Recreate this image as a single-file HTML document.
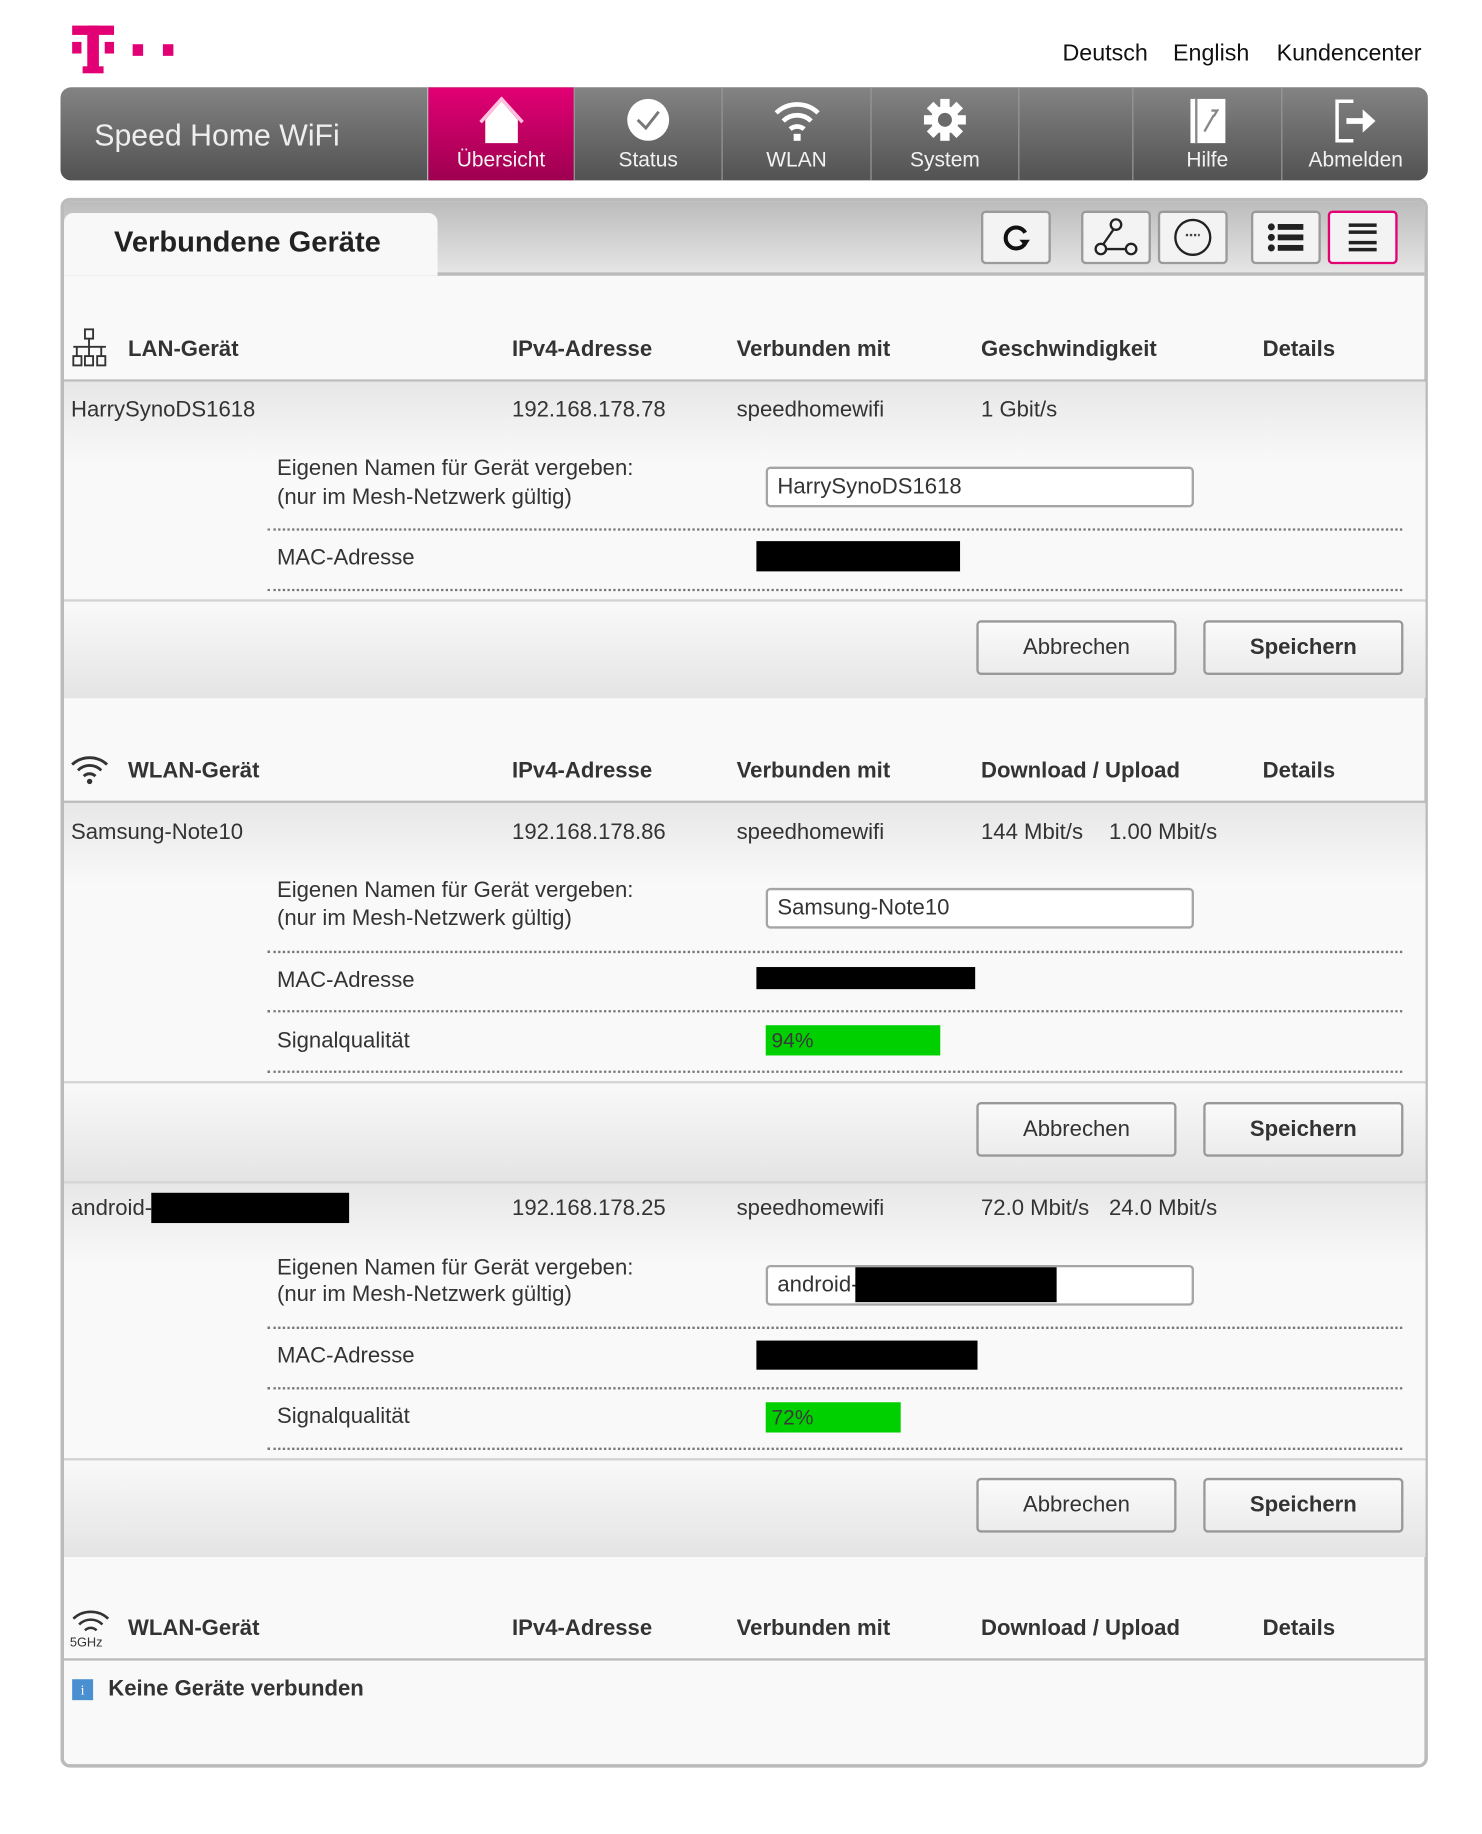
<!DOCTYPE html>
<html><head><meta charset="utf-8"><style>
*{margin:0;padding:0;box-sizing:border-box}
html,body{width:1482px;height:1824px;overflow:hidden;background:#fff}
#s{position:absolute;left:0;top:0;width:1280px;height:1576px;transform:scale(1.1637);transform-origin:0 0;font-family:"Liberation Sans",Arial,sans-serif;color:#333}
.a{position:absolute}
.t{position:absolute;font-size:19px;line-height:22px;white-space:nowrap;transform:translateY(-11px)}
.b{font-weight:bold}
.nav{left:52px;top:75px;width:1175px;height:80px;border-radius:9px;background:linear-gradient(#838383,#525252);overflow:hidden}
.tab{position:absolute;top:0;height:80px;border-left:1px solid #999;color:#f2f2f2;font-size:18px;text-align:center}
.tab span{position:absolute;left:0;right:0;top:52px}
.tab svg{position:absolute;left:50%;top:8px;transform:translateX(-50%)}
.dot{position:absolute;height:0;border-top:2px dotted #777}
.line{position:absolute;left:55px;width:1170px;height:2px;background:#bbb}
.row{position:absolute;left:55px;width:1170px;background:linear-gradient(#e7e7e7,#f9f9f9 70px,#f9f9f9)}
.bar{position:absolute;left:55px;width:1170px;background:linear-gradient(#f9f9f9,#e4e4e4);border-top:2px solid #d3d3d3}
.btn{position:absolute;width:172px;height:47px;border:2px solid #999;border-radius:4px;background:linear-gradient(#fafafa,#ececec);font-size:19px;text-align:center;line-height:43px}
.inp{position:absolute;left:658px;width:368px;height:35px;border:2px solid #a5a5a5;border-radius:4px;background:#fff;font-size:19px;line-height:31px;padding-left:8px}
.blk{position:absolute;background:#000}
.grn{position:absolute;left:658px;background:#00d000;font-size:18px;line-height:26px;padding-left:5px;color:#3a3a3a;height:26px}
.ib{position:absolute;top:181px;width:60px;height:46px;border:2px solid #9a9a9a;border-radius:4px;background:#f3f3f3}
.ib svg{position:absolute;left:50%;top:50%;transform:translate(-50%,-50%)}
</style></head><body><div id="s">
<div class="a" style="left:62px;top:22px;width:36px;height:8px;background:#e20074"></div>
<div class="a" style="left:75px;top:22px;width:10px;height:38px;background:#e20074"></div>
<div class="a" style="left:71px;top:57px;width:18px;height:6px;background:#e20074"></div>
<div class="a" style="left:62px;top:36px;width:8px;height:10px;background:#e20074"></div>
<div class="a" style="left:90px;top:36px;width:8px;height:10px;background:#e20074"></div>
<div class="a" style="left:114px;top:38px;width:9px;height:10px;background:#e20074"></div>
<div class="a" style="left:140px;top:38px;width:9px;height:10px;background:#e20074"></div>
<div class="t" style="left:913px;top:46px;font-size:20px;color:#111">Deutsch</div>
<div class="t" style="left:1008px;top:46px;font-size:20px;color:#111">English</div>
<div class="t" style="left:1097px;top:46px;font-size:20px;color:#111">Kundencenter</div>
<div class="a nav">
<div class="a" style="left:29px;top:26px;color:#eee;font-size:26px">Speed Home WiFi</div>
<div class="tab" style="left:315px;width:126px;background:linear-gradient(#e20074,#9e0050);border-left:1px solid #bbb">
<svg width="40" height="44" viewBox="0 0 40 44"><path d="M6 20 L20 4 L34 20 L34 40 L6 40Z" fill="#fff"/><path d="M2 22 L20 2 L38 22" fill="none" stroke="#ffc0dd" stroke-width="3"/></svg><span>Übersicht</span></div>
<div class="tab" style="left:441px;width:127px"><svg width="40" height="40" viewBox="0 0 40 40"><circle cx="20" cy="20" r="18" fill="#fff"/><path d="M11 20 L18 27 L29 13" fill="none" stroke="#777" stroke-width="2.5"/></svg><span>Status</span></div>
<div class="tab" style="left:568px;width:128px"><svg width="44" height="40" viewBox="0 0 44 40"><g fill="none" stroke="#fff" stroke-width="4"><path d="M4 14 A26 26 0 0 1 40 14"/><path d="M10 21 A17 17 0 0 1 34 21"/><path d="M16 28 A9 9 0 0 1 28 28"/></g><rect x="19" y="32" width="6" height="6" fill="#fff"/></svg><span>WLAN</span></div>
<div class="tab" style="left:696px;width:127px"><svg width="40" height="40" viewBox="0 0 40 40"><g fill="#fff"><circle cx="20" cy="20" r="12"/><rect x="16" y="2" width="8" height="36"/><rect x="2" y="16" width="36" height="8"/><rect x="16" y="2" width="8" height="36" transform="rotate(45 20 20)"/><rect x="16" y="2" width="8" height="36" transform="rotate(-45 20 20)"/></g><circle cx="20" cy="20" r="6" fill="#6a6a6a"/></svg><span>System</span></div>
<div class="tab" style="left:823px;width:98px"></div>
<div class="tab" style="left:921px;width:128px"><svg width="34" height="42" viewBox="0 0 34 42"><rect x="2" y="2" width="30" height="38" fill="#fff"/><rect x="6" y="2" width="2" height="38" fill="#888"/><path d="M14 30 L22 16 M20 12 L25 12 L22 17" stroke="#888" stroke-width="2" fill="none"/></svg><span>Hilfe</span></div>
<div class="tab" style="left:1049px;width:127px"><svg width="40" height="42" viewBox="0 0 40 42"><path d="M18 4 H4 V38 H18" fill="none" stroke="#fff" stroke-width="3"/><path d="M12 21 H28" stroke="#fff" stroke-width="5"/><path d="M26 11 L37 21 L26 31Z" fill="#fff"/></svg><span>Abmelden</span></div>
</div>
<div class="a" style="left:52px;top:170px;width:1175px;height:1349px;border:3px solid #bbb;border-radius:8px;background:#f9f9f9;overflow:hidden">
<div class="a" style="left:0;top:0;width:1170px;height:64px;background:linear-gradient(#bcbcbc,#e5e5e5);border-bottom:3px solid #bbb"></div>
<div class="a" style="left:0;top:10px;width:321px;height:54px;background:#f8f8f8;border-radius:8px 8px 0 0"></div>
</div>
<div class="t b" style="left:98px;top:208px;font-size:25px;line-height:28px;transform:translateY(-14px);color:#222">Verbundene Geräte</div>
<div class="ib" style="left:843px"><svg width="28" height="28" viewBox="0 0 28 28"><path d="M22 10 A9 9 0 1 0 22 19" fill="none" stroke="#111" stroke-width="3.5"/><path d="M17 16 L26 16 L22 22Z" fill="#111"/></svg></div>
<div class="ib" style="left:929px"><svg width="40" height="36" viewBox="0 0 40 36"><g fill="none" stroke="#222" stroke-width="2"><circle cx="20" cy="7" r="4.5"/><circle cx="7" cy="28" r="4.5"/><circle cx="33" cy="28" r="4.5"/><path d="M18 11 L9 24 M12 28 H28"/></g></svg></div>
<div class="ib" style="left:995px"><svg width="36" height="36" viewBox="0 0 36 36"><circle cx="18" cy="18" r="15" fill="none" stroke="#222" stroke-width="2"/><path d="M12 16 H24" stroke="#444" stroke-width="2" stroke-dasharray="2 1.5"/></svg></div>
<div class="ib" style="left:1075px"><svg width="32" height="26" viewBox="0 0 32 26"><g fill="#222"><circle cx="3.5" cy="4" r="3"/><circle cx="3.5" cy="13" r="3"/><circle cx="3.5" cy="22" r="3"/><rect x="9" y="1.5" width="22" height="5"/><rect x="9" y="10.5" width="22" height="5"/><rect x="9" y="19.5" width="22" height="5"/></g></svg></div>
<div class="ib" style="left:1141px;border-color:#e20074"><svg width="26" height="28" viewBox="0 0 26 28"><g fill="#222"><rect x="1" y="2" width="24" height="3"/><rect x="1" y="8" width="24" height="3"/><rect x="1" y="17" width="24" height="3"/><rect x="1" y="23" width="24" height="3"/></g></svg></div>

<svg class="a" style="left:61px;top:282px" width="32" height="34" viewBox="0 0 32 34"><g fill="none" stroke="#333" stroke-width="1.6"><rect x="12" y="1" width="7" height="8"/><path d="M15.5 9 V16 M2 16 H30 M5 16 V24 M15.5 16 V24 M26 16 V24"/><rect x="2" y="24" width="7" height="8"/><rect x="12" y="24" width="7" height="8"/><rect x="22.5" y="24" width="7" height="8"/></g></svg>
<div class="t b" style="left:110px;top:301px">LAN-Gerät</div>
<div class="t b" style="left:440px;top:301px">IPv4-Adresse</div>
<div class="t b" style="left:633px;top:301px">Verbunden mit</div>
<div class="t b" style="left:843px;top:301px">Geschwindigkeit</div>
<div class="t b" style="left:1085px;top:301px">Details</div>
<div class="line" style="top:326px"></div>
<div class="row" style="top:328px;height:188px"></div>
<div class="t" style="left:61px;top:353px">HarrySynoDS1618</div>
<div class="t" style="left:440px;top:353px">192.168.178.78</div>
<div class="t" style="left:633px;top:353px">speedhomewifi</div>
<div class="t" style="left:843px;top:353px">1 Gbit/s</div>
<div class="t" style="left:238px;top:403px">Eigenen Namen für Gerät vergeben:</div>
<div class="t" style="left:238px;top:428px">(nur im Mesh-Netzwerk gültig)</div>
<div class="inp" style="top:401px">HarrySynoDS1618</div>
<div class="dot" style="left:230px;width:975px;top:454px"></div>
<div class="t" style="left:238px;top:480px">MAC-Adresse</div>
<div class="blk" style="left:650px;top:465px;width:175px;height:26px"></div>
<div class="dot" style="left:230px;width:975px;top:506px"></div>
<div class="bar" style="top:515px;height:85px"></div>
<div class="btn" style="left:839px;top:533px">Abbrechen</div>
<div class="btn b" style="left:1034px;top:533px">Speichern</div>

<svg class="a" style="left:60px;top:648px" width="34" height="26" viewBox="0 0 34 26"><g fill="none" stroke="#333" stroke-width="2.5"><path d="M2 9 A22 22 0 0 1 32 9"/><path d="M7 14 A14 14 0 0 1 27 14"/><path d="M12 19 A7 7 0 0 1 22 19"/></g><circle cx="17" cy="23.5" r="2.3" fill="#333"/></svg>
<div class="t b" style="left:110px;top:663px">WLAN-Gerät</div>
<div class="t b" style="left:440px;top:663px">IPv4-Adresse</div>
<div class="t b" style="left:633px;top:663px">Verbunden mit</div>
<div class="t b" style="left:843px;top:663px">Download / Upload</div>
<div class="t b" style="left:1085px;top:663px">Details</div>
<div class="line" style="top:688px"></div>
<div class="row" style="top:690px;height:240px"></div>
<div class="t" style="left:61px;top:716px">Samsung-Note10</div>
<div class="t" style="left:440px;top:716px">192.168.178.86</div>
<div class="t" style="left:633px;top:716px">speedhomewifi</div>
<div class="t" style="left:843px;top:716px">144 Mbit/s</div>
<div class="t" style="left:953px;top:716px">1.00 Mbit/s</div>
<div class="t" style="left:238px;top:766px">Eigenen Namen für Gerät vergeben:</div>
<div class="t" style="left:238px;top:790px">(nur im Mesh-Netzwerk gültig)</div>
<div class="inp" style="top:763px">Samsung-Note10</div>
<div class="dot" style="left:230px;width:975px;top:817px"></div>
<div class="t" style="left:238px;top:843px">MAC-Adresse</div>
<div class="blk" style="left:650px;top:831px;width:188px;height:19px"></div>
<div class="dot" style="left:230px;width:975px;top:868px"></div>
<div class="t" style="left:238px;top:895px">Signalqualität</div>
<div class="grn" style="top:881px;width:150px">94%</div>
<div class="dot" style="left:230px;width:975px;top:920px"></div>
<div class="bar" style="top:929px;height:86px"></div>
<div class="btn" style="left:839px;top:947px">Abbrechen</div>
<div class="btn b" style="left:1034px;top:947px">Speichern</div>

<div class="row" style="top:1015px;height:239px;border-top:2px solid #d3d3d3"></div>
<div class="t" style="left:61px;top:1039px">android-</div>
<div class="blk" style="left:130px;top:1025px;width:170px;height:26px"></div>
<div class="t" style="left:440px;top:1039px">192.168.178.25</div>
<div class="t" style="left:633px;top:1039px">speedhomewifi</div>
<div class="t" style="left:843px;top:1039px">72.0 Mbit/s</div>
<div class="t" style="left:953px;top:1039px">24.0 Mbit/s</div>
<div class="t" style="left:238px;top:1090px">Eigenen Namen für Gerät vergeben:</div>
<div class="t" style="left:238px;top:1113px">(nur im Mesh-Netzwerk gültig)</div>
<div class="inp" style="top:1087px">android-</div>
<div class="blk" style="left:735px;top:1089px;width:173px;height:30px"></div>
<div class="dot" style="left:230px;width:975px;top:1140px"></div>
<div class="t" style="left:238px;top:1166px">MAC-Adresse</div>
<div class="blk" style="left:650px;top:1152px;width:190px;height:25px"></div>
<div class="dot" style="left:230px;width:975px;top:1192px"></div>
<div class="t" style="left:238px;top:1218px">Signalqualität</div>
<div class="grn" style="top:1205px;width:116px">72%</div>
<div class="dot" style="left:230px;width:975px;top:1244px"></div>
<div class="bar" style="top:1253px;height:85px"></div>
<div class="btn" style="left:839px;top:1270px">Abbrechen</div>
<div class="btn b" style="left:1034px;top:1270px">Speichern</div>

<svg class="a" style="left:60px;top:1382px" width="36" height="36" viewBox="0 0 36 36"><g fill="none" stroke="#333" stroke-width="2.2"><path d="M3 9 A22 22 0 0 1 33 9"/><path d="M8 14 A14 14 0 0 1 28 14"/><path d="M13 19 A7 7 0 0 1 23 19"/></g><text x="0" y="33" font-size="11" font-family="Liberation Sans Narrow,Liberation Sans,sans-serif" fill="#333">5GHz</text></svg>
<div class="t b" style="left:110px;top:1400px">WLAN-Gerät</div>
<div class="t b" style="left:440px;top:1400px">IPv4-Adresse</div>
<div class="t b" style="left:633px;top:1400px">Verbunden mit</div>
<div class="t b" style="left:843px;top:1400px">Download / Upload</div>
<div class="t b" style="left:1085px;top:1400px">Details</div>
<div class="line" style="top:1425px"></div>
<div class="a" style="left:62px;top:1443px;width:18px;height:18px;background:#4a90d0;color:#fff;font-size:12px;text-align:center;line-height:18px;font-family:'Liberation Serif',serif">i</div>
<div class="t b" style="left:93px;top:1452px">Keine Geräte verbunden</div>
</div></body></html>
